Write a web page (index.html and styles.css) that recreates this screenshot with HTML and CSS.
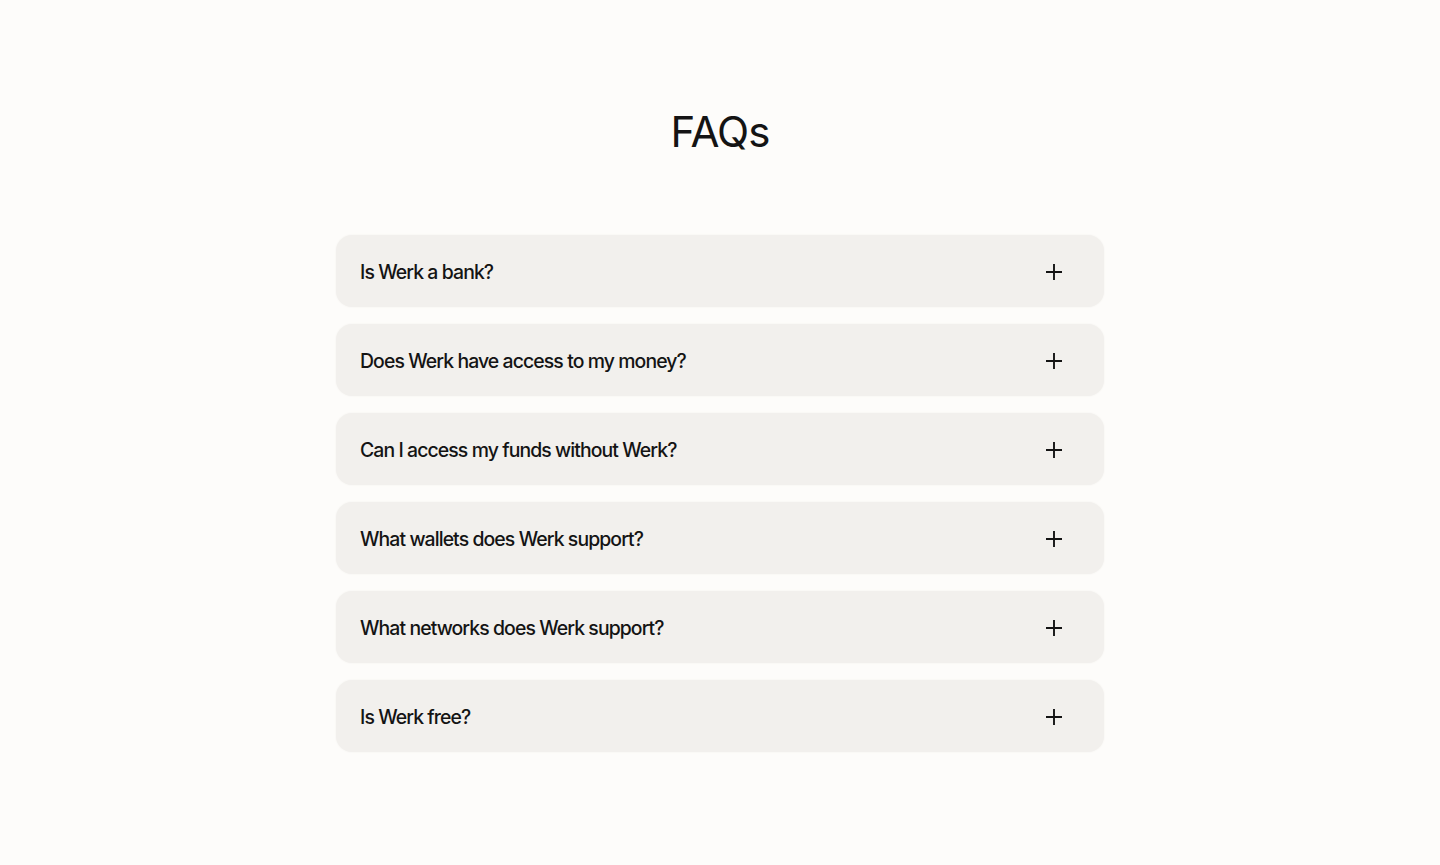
FILE: index.html
```html
<!DOCTYPE html>
<html lang="en">
<head>
    <meta charset="UTF-8">
    <title>FAQs - Werk</title>
    <meta name="viewport" content="width=device-width, initial-scale=1">
    <link rel="stylesheet" href="styles.css">
</head>
<body>
    <section class="faq">
        <h1 class="faq-title">FAQs</h1>
        <div class="faq-list">
            <button class="faq-item">
                <span class="faq-question">Is Werk a bank?</span>
                <svg class="faq-icon" viewBox="0 0 18 18"><path d="M9 1v16M1 9h16"/></svg>
            </button>
            <button class="faq-item">
                <span class="faq-question">Does Werk have access to my money?</span>
                <svg class="faq-icon" viewBox="0 0 18 18"><path d="M9 1v16M1 9h16"/></svg>
            </button>
            <button class="faq-item">
                <span class="faq-question">Can I access my funds without Werk?</span>
                <svg class="faq-icon" viewBox="0 0 18 18"><path d="M9 1v16M1 9h16"/></svg>
            </button>
            <button class="faq-item">
                <span class="faq-question">What wallets does Werk support?</span>
                <svg class="faq-icon" viewBox="0 0 18 18"><path d="M9 1v16M1 9h16"/></svg>
            </button>
            <button class="faq-item">
                <span class="faq-question">What networks does Werk support?</span>
                <svg class="faq-icon" viewBox="0 0 18 18"><path d="M9 1v16M1 9h16"/></svg>
            </button>
            <button class="faq-item">
                <span class="faq-question">Is Werk free?</span>
                <svg class="faq-icon" viewBox="0 0 18 18"><path d="M9 1v16M1 9h16"/></svg>
            </button>
        </div>
    </section>
</body>
</html>
```

FILE: styles.css
```css
body {
    font-family: Inter, 'Noto Sans', sans-serif;
    background: #fdfcfa;
    color: #141414;
    margin: 0;
    min-height: 100vh;
}
.faq {
    padding: 106px 0 80px 0;
    display: flex;
    flex-direction: column;
    align-items: center;
}
.faq-title {
    margin: 0 0 77px 0;
    font-size: 42px;
    font-weight: 400;
    letter-spacing: -1px;
    line-height: 52px;
}
.faq-list {
    width: 768px;
    display: flex;
    flex-direction: column;
    gap: 17px;
}
.faq-item {
    display: flex;
    align-items: center;
    justify-content: space-between;
    height: 72px;
    padding: 0 41px 0 24px;
    background: #f2f0ed;
    border: none;
    border-radius: 16px;
    box-shadow: 0 0 2px #f2f0ed;
    font: inherit;
    color: inherit;
    cursor: pointer;
    text-align: left;
}
.faq-question {
    font-size: 19.4px;
    font-weight: 450;
    letter-spacing: -0.9px;
    padding-top: 2px;
}
.faq-icon {
    width: 18px;
    height: 18px;
    margin-top: 2px;
    fill: none;
    stroke: #141414;
    stroke-width: 1.9;
}
```
